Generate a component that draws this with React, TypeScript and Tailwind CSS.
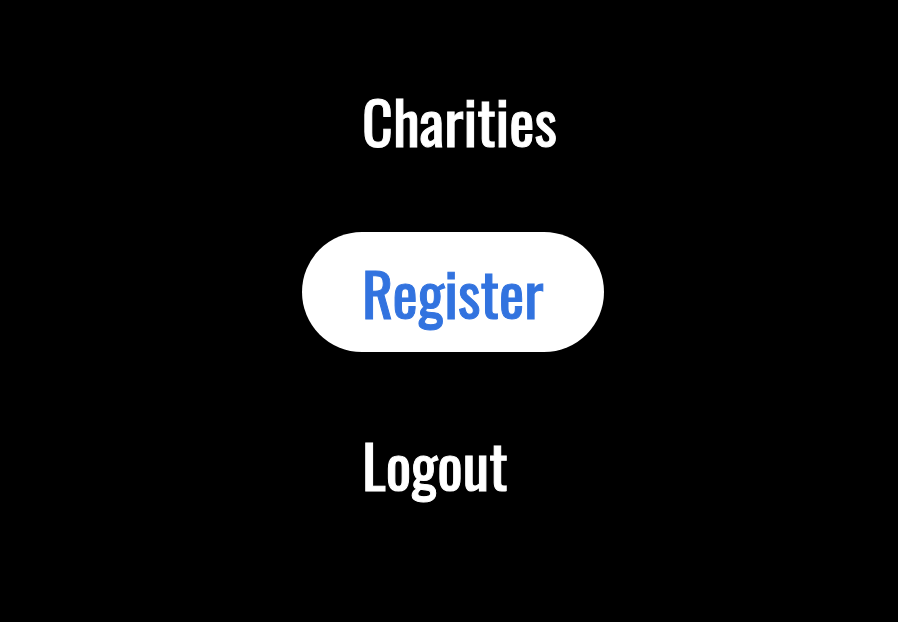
const links = [
  { label: 'Charities', active: false },
  { label: 'Register', active: true },
  { label: 'Logout', active: false },
];

export default function App() {
  return (
    <div className="min-h-screen bg-black pt-[60px] pb-12 font-['Oswald','Liberation_Sans_Narrow','Liberation_Sans',sans-serif]">
      <nav aria-label="Main" className="mx-auto w-[294px]">
        <ul className="flex flex-col items-start gap-[52px]">
          {links.map(({ label, active }) => (
            <li key={label}>
              <a
                href="#"
                aria-current={active ? 'page' : undefined}
                className={
                  'flex h-[120px] items-center rounded-full px-[60px] text-[60px] leading-[72px] whitespace-nowrap [-webkit-text-stroke:1px_currentColor] ' +
                  (active ? 'bg-white text-[#3273df]' : 'text-white')
                }
              >
                {label}
              </a>
            </li>
          ))}
        </ul>
      </nav>
    </div>
  );
}
